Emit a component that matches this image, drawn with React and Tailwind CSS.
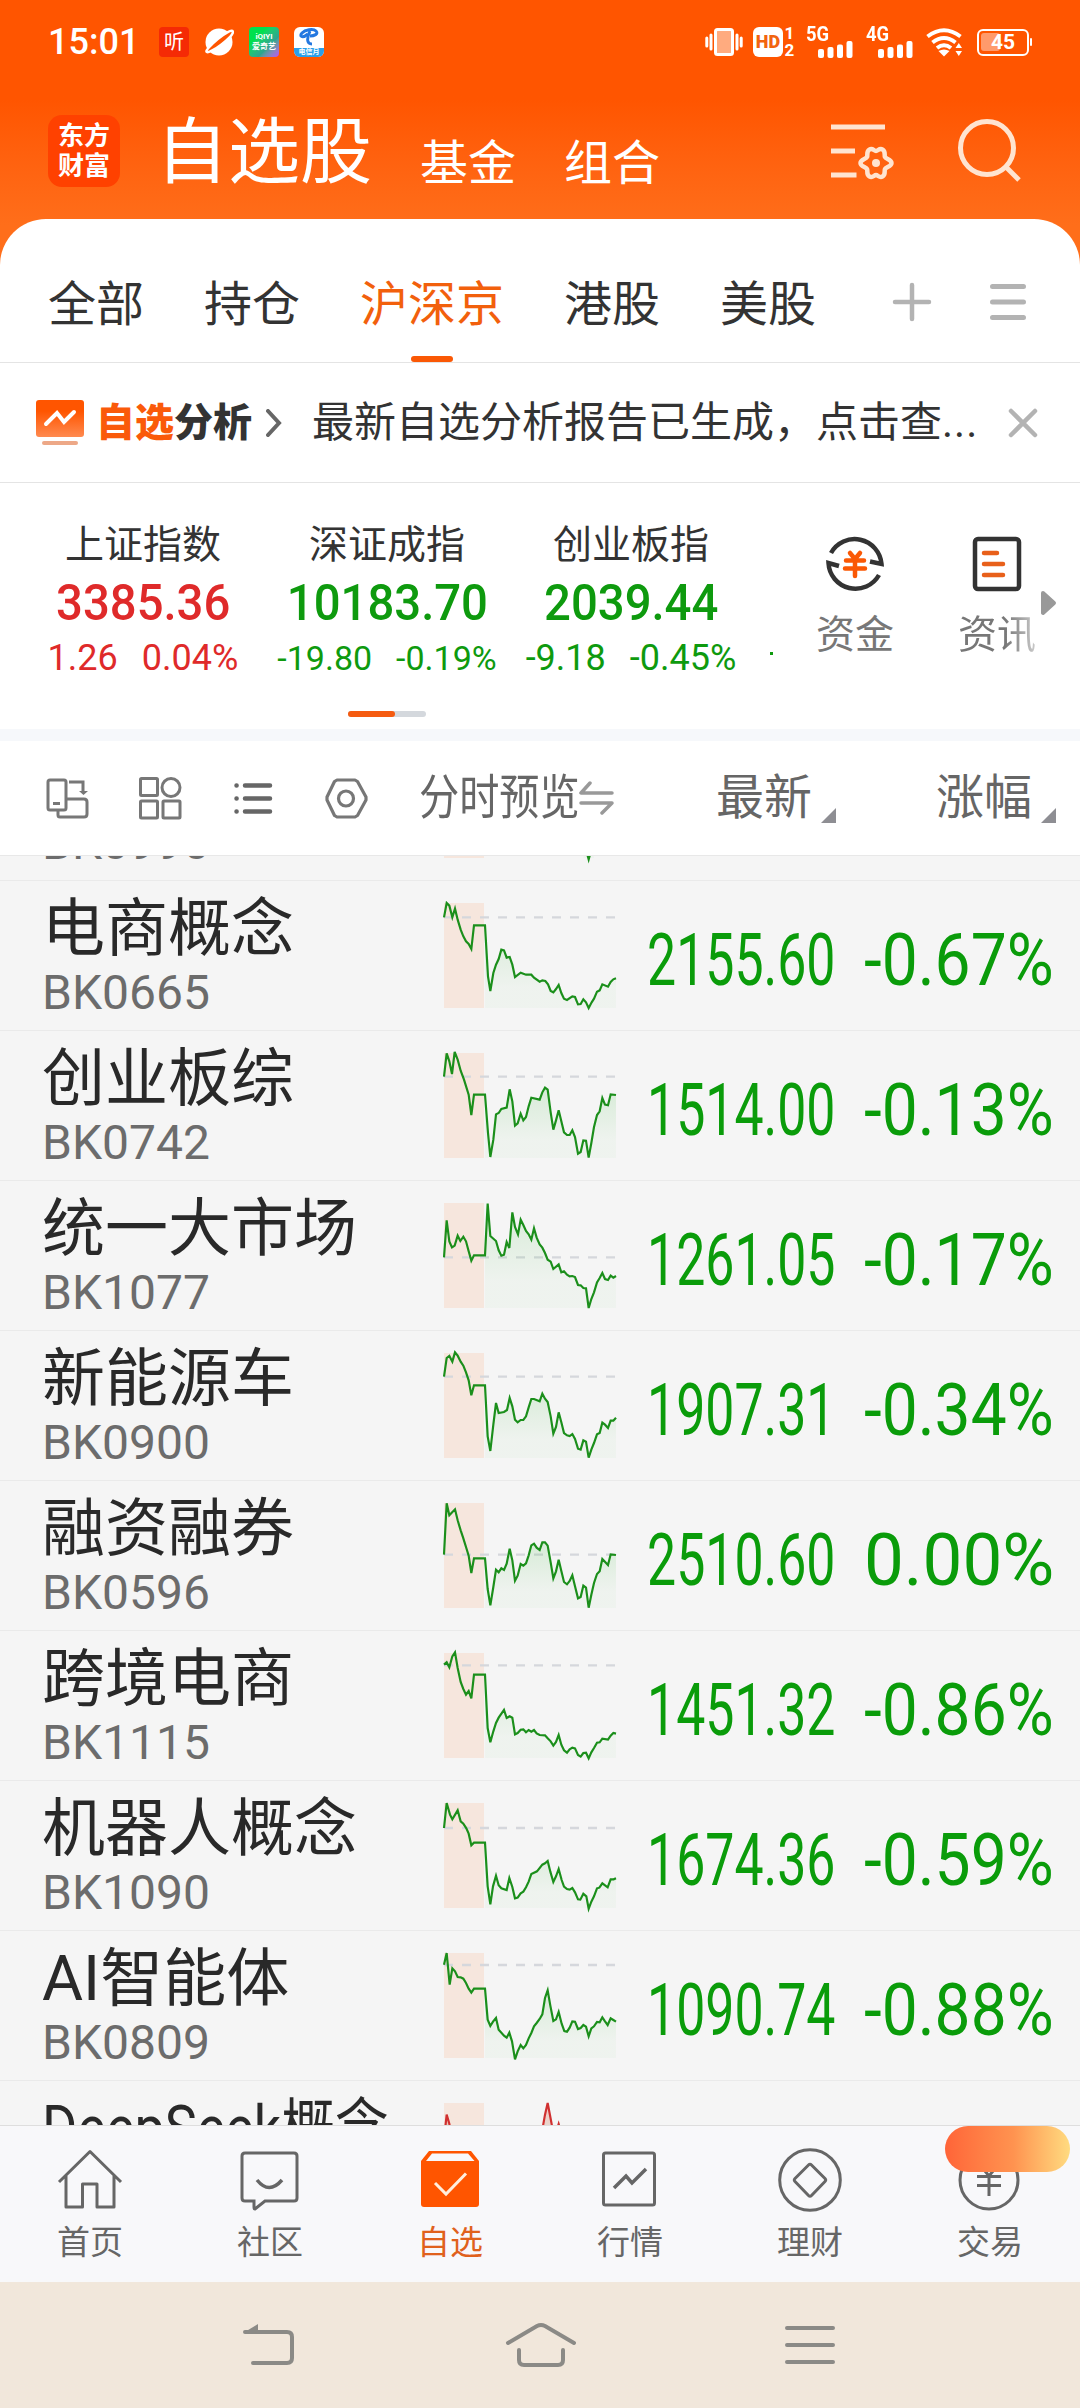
import clsx from "clsx";

const TABS = ["全部", "持仓", "沪深京", "港股", "美股"];

const INDEXES = [
  { name: "上证指数", value: "3385.36", change: "1.26", percent: "0.04%", up: true },
  { name: "深证成指", value: "10183.70", change: "-19.80", percent: "-0.19%", small: true },
  { name: "创业板指", value: "2039.44", change: "-9.18", percent: "-0.45%" },
];

// trend points live in a 516x315 box, base is the previous close
const ROWS = [
  { code: "BK0990", base: -60, trend: "418,262 426,290 434,319 442,290 450,262" },
  {
    name: "电商概念", code: "BK0665", price: "2155.60", percent: "-0.67%", base: 43,
    trend: "0,43 8,0 16,8 25,43 33,17 41,50 50,80 58,100 66,115 74,123 82,138 90,67 123,67 132,220 139,264 148,210 156,185 164,168 172,140 180,142 188,164 197,162 205,185 213,222 230,209 246,215 262,215 270,224 287,236 295,232 304,234 312,244 320,264 328,268 336,258 344,246 352,270 360,287 369,291 385,280 393,282 402,304 410,303 418,289 426,298 434,315 443,298 450,287 459,266 467,262 475,244 492,251 500,237 508,229 516,226",
  },
  {
    name: "创业板综", code: "BK0742", price: "1514.00", percent: "-0.13%", base: 71,
    trend: "0,71 8,1 16,25 24,63 32,-3 41,20 50,53 60,80 74,125 82,186 90,125 123,125 132,240 139,312 148,260 156,184 164,180 172,168 188,164 197,109 205,145 213,218 221,211 230,182 238,202 246,192 254,160 262,134 287,140 295,118 303,104 311,110 320,178 328,230 336,202 344,172 352,205 360,238 369,246 377,246 385,232 393,252 402,302 410,297 418,262 426,263 434,314 442,270 450,222 459,186 467,175 475,135 483,155 492,157 500,124 516,126",
  },
  {
    name: "统一大市场", code: "BK1077", price: "1261.05", percent: "-0.17%", base: 163,
    trend: "0,163 8,52 16,115 24,133 32,128 41,98 49,114 58,101 66,115 74,145 82,173 90,157 123,157 131,2 139,99 156,114 164,142 172,158 180,155 188,117 196,135 205,28 213,72 222,94 230,50 238,66 246,84 254,94 262,110 270,76 278,104 287,124 295,134 303,150 311,170 320,176 328,198 344,184 352,208 360,205 369,215 377,220 385,219 393,222 402,246 410,247 418,255 426,256 434,315 442,288 450,268 459,238 467,225 475,210 483,228 492,231 500,218 508,224 516,219",
  },
  {
    name: "新能源车", code: "BK0900", price: "1907.31", percent: "-0.34%", base: 71,
    trend: "0,71 8,15 16,9 25,26 33,-2 41,8 50,26 58,38 66,58 74,82 82,127 90,97 123,97 131,250 139,294 148,215 156,150 164,180 180,177 189,171 197,135 205,160 213,200 221,208 230,201 238,201 246,190 254,163 262,138 270,138 287,145 295,122 303,137 311,147 320,190 328,242 336,222 344,178 352,208 360,240 369,247 377,249 385,243 393,258 402,287 410,290 418,262 426,266 434,314 442,290 450,270 459,244 467,240 475,209 483,215 492,225 500,203 508,203 516,194",
  },
  {
    name: "融资融券", code: "BK0596", price: "2510.60", percent: "0.00%", base: 155,
    trend: "0,155 8,1 16,37 33,19 41,52 50,82 58,106 66,132 74,158 82,210 90,166 123,166 131,258 139,307 148,252 156,200 164,208 172,196 180,201 188,182 197,137 205,172 213,233 221,218 230,183 238,188 246,181 254,157 262,127 270,122 278,134 287,141 295,118 303,118 311,128 320,178 328,226 336,205 344,170 352,204 360,237 369,244 377,234 385,217 393,250 402,286 410,282 418,248 426,254 434,314 442,275 450,240 459,213 467,205 475,168 492,186 500,154 516,156",
  },
  {
    name: "跨境电商", code: "BK1115", price: "1451.32", percent: "-0.86%", base: 37,
    trend: "0,35 8,28 16,43 25,10 33,-2 41,45 50,87 58,108 66,125 74,114 82,136 90,65 123,65 131,225 139,268 148,235 156,210 164,194 180,171 188,195 197,190 205,194 213,244 221,240 230,230 238,229 246,238 254,231 262,236 270,231 278,241 287,246 303,247 311,256 320,265 328,278 336,267 344,246 352,275 360,292 369,299 377,289 385,284 393,286 402,306 410,311 418,300 426,299 434,316 442,298 450,285 459,269 467,268 475,257 492,260 500,248 508,240 516,242",
  },
  {
    name: "机器人概念", code: "BK1090", price: "1674.36", percent: "-0.59%", base: 75,
    trend: "0,75 8,0 18,35 25,49 41,22 50,55 58,62 67,76 74,92 82,127 90,119 123,119 131,250 139,304 147,250 156,218 164,247 172,256 188,261 196,225 205,252 213,286 221,284 230,271 238,266 246,253 254,236 262,213 279,205 295,185 303,181 311,174 319,206 328,237 336,220 344,198 353,231 360,251 369,258 377,260 385,255 393,268 402,289 409,290 418,272 427,280 434,317 442,296 450,280 459,256 466,254 475,241 491,253 500,229 509,229 516,226",
  },
  {
    name: "AI智能体", code: "BK0809", price: "1090.74", percent: "-0.88%", base: 36,
    trend: "0,35 8,0 17,95 25,46 33,55 41,72 50,73 58,77 66,90 74,107 82,119 90,107 123,107 131,200 139,219 147,206 156,195 164,230 180,248 188,254 196,239 204,265 213,319 221,295 230,276 238,286 246,276 254,256 262,240 270,220 278,210 287,198 295,184 303,135 311,112 319,158 328,204 336,199 344,177 353,212 361,234 369,236 377,224 385,205 393,206 402,228 410,225 418,216 426,221 434,250 442,226 450,220 459,207 467,208 475,193 483,205 491,216 500,196 508,201 516,206",
  },
  { name: "DeepSeek概念", code: "", base: 150, up: true, narrow: true, trend: "0,110 8,35 16,62 24,110 295,80 303,35 311,0 319,42 328,90 336,90 344,63 352,90" },
];

function SignalBars() {
  return (
    <svg width="35" height="17" viewBox="0 0 35 17" fill="#fff">
      <rect x="0" y="8" width="6" height="9" rx="2" />
      <rect x="9.5" y="6" width="6" height="11" rx="2" />
      <rect x="19" y="3.5" width="6" height="13.5" rx="2" />
      <rect x="28.5" y="0" width="6" height="17" rx="2" />
    </svg>
  );
}

function Signal({ label }) {
  return (
    <div className="flex h-[30px] w-[48px] flex-col">
      <span className="h-[14px] origin-left scale-x-[0.92] text-[20px] font-bold leading-[15px]">{label}</span>
      <div className="pl-3">
        <SignalBars />
      </div>
    </div>
  );
}

function StatusBar() {
  return (
    <div className="flex h-[84px] items-center pl-12 pr-[51px] text-white">
      <span className="w-[111px] text-[36px] font-medium leading-[42px]">15:01</span>
      <div className="flex gap-[15px]">
        <span className="flex size-[30px] items-center justify-center rounded bg-[#f52a05] text-[20px] leading-none">听</span>
        <svg width="30" height="30" viewBox="0 0 30 30">
          <circle cx="15" cy="15" r="13.5" fill="#fff" />
          <path d="M3 25C-2 24 28-2 29 5C29 10 6 27 3 25Z" fill="#ff5500" stroke="#fff" strokeWidth="2.5" />
        </svg>
        <span className="flex size-[30px] flex-col items-center justify-center rounded bg-linear-to-br from-[#00e04e] from-30% via-[#2fa38f] via-65% to-[#b84df0] text-[8px] font-bold leading-[10px]">
          <span>iQIYI</span>
          <span className="whitespace-nowrap">爱奇艺</span>
        </span>
        <span className="flex size-[30px] flex-col items-center justify-between overflow-hidden rounded-md bg-white">
          <svg width="22" height="19" viewBox="0 0 22 19" fill="none" stroke="#2478e0" strokeWidth="3">
            <path d="M10 7C4 12 1 9 4 6S15 1 18 4S16 9 12 9" />
            <path d="M12 4C9 10 8 17 14 17" />
          </svg>
          <span className="w-full bg-[#2b9fea] text-center text-[7px] font-bold leading-[9px]">电信月</span>
        </span>
      </div>
      <div className="ml-auto flex items-center">
        <svg width="38" height="30" viewBox="0 0 38 30" className="mr-2.5" stroke="#fff" fill="none" strokeWidth="3">
          <rect x="10.5" y="2.5" width="17" height="25" rx="2" fill="#ffab7f" />
          <path d="M6 8V22M1.8 11V19M32 8V22M36.2 11V19" strokeLinecap="round" />
        </svg>
        <span className="flex size-[30px] items-center justify-center rounded-md bg-white text-[18px] font-black leading-none text-[#f2640f]">HD</span>
        <span className="mr-2.5 flex w-[13px] flex-col items-center text-[17px] font-bold leading-[17px]">
          <span>1</span>
          <span>2</span>
        </span>
        <div className="mr-3">
          <Signal label="5G" />
        </div>
        <div className="mr-3">
          <Signal label="4G" />
        </div>
        <svg width="38" height="30" viewBox="0 0 38 30" className="mr-[13px]" fill="none" stroke="#fff" strokeWidth="4">
          <path d="M1.5 9.5Q18 -3 34.500 9.5M6.500 15.500Q18 6.500 29.500 15.500M11 21Q18 15.500 25 21" />
          <path d="M12.500 24L18 29.500L23.500 24Q18 21 12.500 24Z" fill="#fff" stroke="none" />
          <path d="M29.500 21H36L32.800 16ZM29.500 24H36L32.800 29Z" fill="#fff" stroke="none" />
        </svg>
        <div className="relative flex h-[27px] w-[52px] items-center justify-center rounded-md border-[2.5px] border-white">
          <span className="absolute left-[2px] top-[2px] h-[18px] w-[19px] rounded-[3px] bg-[#ff9a6b]" />
          <span className="absolute -right-[5px] top-[7px] h-2 w-[2px] rounded bg-white" />
          <span className="relative text-[21px] font-bold leading-none">45</span>
        </div>
      </div>
    </div>
  );
}

function AppHeader() {
  return (
    <div className="flex h-[135px] pl-12 text-white">
      <div className="mt-[31px] flex size-[72px] flex-col items-center justify-center rounded-[14px] bg-[#ff4100] text-[26px] font-bold leading-[30px]">
        <span>东方</span>
        <span>财富</span>
      </div>
      <h1 className="ml-[36px] mt-[27px] text-[72px] leading-[84px]">自选股</h1>
      <span className="ml-[48px] mt-[50px] text-[48px] leading-[60px]">基金</span>
      <span className="ml-12 mt-[50px] text-[48px] leading-[60px]">组合</span>
      <svg width="66" height="60" viewBox="0 0 66 60" className="ml-[171px] mt-[37px]" fill="none" stroke="#ffe4d0" strokeWidth="5">
        <path d="M0 6H54M0 30H24M0 54H25.500" />
        <path
          d="M38.500 28.500C41.500 26.500 43 30 45 30S48.500 26.500 51.500 28.500C55 30.500 53 34 54 36S60.500 38.500 60.500 42S55 46 54 48S55 53.500 51.500 55.500C48.500 57.500 47 54 45 54S41.500 57.500 38.500 55.500C35 53.500 37 50 36 48S29.500 45.500 29.500 42S35 38 36 36S35 30.500 38.500 28.500Z"
          strokeWidth="4.500"
          strokeLinejoin="round"
        />
        <circle cx="45" cy="42" r="4" fill="#ffe4d0" stroke="none" />
      </svg>
      <svg width="64" height="66" viewBox="0 0 64 66" className="ml-[60px] mt-[33px]" fill="none" stroke="#ffe4d0" strokeWidth="5">
        <circle cx="30" cy="31" r="26.500" />
        <path d="M48 49L62 63" />
      </svg>
    </div>
  );
}

function TabBar() {
  return (
    <div className="flex h-[144px] border-b border-[#e4e4e4] pl-12">
      <div className="flex gap-[60px]">
        {TABS.map((tab) => {
          const active = tab === "沪深京";
          return (
            <div key={tab} className={clsx("flex flex-col items-center pt-[56px] text-[48px] leading-[60px]", active ? "text-[#f2600c]" : "text-[#333]")}>
              <span>{tab}</span>
              {active && <span className="mt-[21px] h-1.5 w-[42px] rounded-full bg-[#fa5805]" />}
            </div>
          );
        })}
      </div>
      <svg width="40" height="40" viewBox="0 0 40 40" className="ml-[76px] mt-[63px]" stroke="#b3b3b3" strokeWidth="4.500" strokeLinecap="round">
        <path d="M3 20H37M20 3V37" />
      </svg>
      <svg width="36" height="40" viewBox="0 0 36 40" className="ml-[58px] mt-[63px]" stroke="#b3b3b3" strokeWidth="5" strokeLinecap="round">
        <path d="M2.500 4.500H33.500M2.500 20H33.500M2.500 35.500H33.500" />
      </svg>
    </div>
  );
}

function ReportBanner() {
  return (
    <div className="flex h-[120px] items-center border-b border-[#e4e4e4] pl-9">
      <svg width="48" height="46" viewBox="0 0 48 46">
        <defs>
          <linearGradient id="report" x1="0" y1="0" x2="0" y2="1">
            <stop offset="0.3" stopColor="#ff5500" />
            <stop offset="1" stopColor="#ff8a50" />
          </linearGradient>
        </defs>
        <rect width="48" height="37" rx="3" fill="url(#report)" />
        <path d="M10 24L21 13L28 22L38 12" fill="none" stroke="#fff" strokeWidth="4" strokeLinecap="round" />
        <rect x="6" y="41" width="36" height="4" rx="2" fill="#eda887" />
      </svg>
      <span className="ml-3 text-[39px] font-black leading-[48px] text-[#333]">
        <span className="text-[#fa5a0a]">自选</span>分析
      </span>
      <svg width="16" height="28" viewBox="0 0 16 28" className="ml-[14px]" fill="none" stroke="#666" strokeWidth="4" strokeLinecap="round">
        <path d="M2 2L13 14L2 26" />
      </svg>
      <span className="ml-[30px] w-[666px] whitespace-nowrap text-[42px] leading-[48px] text-[#333]">
        最新自选分析报告已生成，点击查<span className="tracking-[1px]">...</span>
      </span>
      <svg width="30" height="30" viewBox="0 0 30 30" className="ml-[30px]" stroke="#b3b3b3" strokeWidth="4.500" strokeLinecap="round">
        <path d="M3 3L27 27M27 3L3 27" />
      </svg>
    </div>
  );
}

function IndexPanel() {
  return (
    <div className="flex h-[246px] pl-[21px]">
      <div className="w-[754px]">
        <div className="flex overflow-hidden pt-[37px]">
          {INDEXES.map((item) => (
            <div key={item.name} className={clsx("flex w-[244px] shrink-0 flex-col items-center", item.up ? "text-[#df2a2a]" : "text-[#0e9a0e]")}>
              <span className="text-[39px] leading-[50px] text-[#333]">{item.name}</span>
              <span className="mt-1 scale-x-[0.945] text-[50px] font-medium leading-[58px]">{item.value}</span>
              <span className={clsx("mt-[5px] flex gap-6 leading-[42px]", item.small ? "text-[34px]" : "text-[36px]")}>
                <span>{item.change}</span>
                <span>{item.percent}</span>
              </span>
            </div>
          ))}
          <div className="mt-[132px] size-[3px] translate-x-[17px] bg-[#0e9a0e]" />
        </div>
        <div className="ml-[327px] mt-[32px] h-1.5 w-[78px] rounded-full bg-[#d4d8dd]">
          <div className="h-1.5 w-[47px] rounded-full bg-[#f55b10]" />
        </div>
      </div>
      <div className="flex w-[160px] flex-col items-center pt-[50px] text-[39px] leading-[50px] text-[#777]">
        <svg width="62" height="62" viewBox="0 0 62 62" fill="none" stroke="#333" strokeWidth="4.500">
          <path d="M7 20A27 27 0 0 1 57.500 31L46 28.500" strokeLinejoin="miter" />
          <path d="M55 42A27 27 0 0 1 4.500 30L15 33" />
          <path d="M26 20L31 26L36 20M22 27.500H40M21 35.500H41M31 26V43" stroke="#fa5805" strokeLinecap="round" />
        </svg>
        <span className="mt-[15px]">资金</span>
      </div>
      <div className="flex w-[106px] flex-col items-center pt-[50px] text-[39px] leading-[50px] text-[#777]">
        <svg width="50" height="62" viewBox="0 0 50 62" className="ml-[18px]" fill="none" stroke="#333" strokeWidth="4.500">
          <rect x="3" y="6" width="44" height="50" rx="3" />
          <path d="M12 20H25M12 31H31M12 42H31" stroke="#e8601a" strokeLinecap="round" />
        </svg>
        <span className="ml-[18px] mt-[15px] bg-linear-to-r from-[#777] from-60% to-[#ccc] bg-clip-text text-transparent">资讯</span>
      </div>
      <svg width="16" height="26" viewBox="0 0 16 26" className="mt-[107px]">
        <path d="M2 3L13 13L2 23Z" fill="#999" stroke="#999" strokeWidth="4" strokeLinejoin="round" />
      </svg>
    </div>
  );
}

function SortMark() {
  return (
    <svg width="15" height="15" viewBox="0 0 15 15" className="mb-8 self-end">
      <path d="M15 0V15H0Z" fill="#8e8e93" />
    </svg>
  );
}

function ListToolbar() {
  return (
    <div className="flex h-[115px] items-center border-b border-[#e8e8e8] pl-[46px] text-[48px] leading-[60px] text-[#666]">
      <svg width="43" height="43" viewBox="0 0 43 43" fill="none" stroke="#777" strokeWidth="3">
        <rect x="2" y="3" width="18" height="30" rx="2" />
        <path d="M7 26.500H14M12 34V38Q12 40 14 40H38Q41 40 41 37V25Q41 22 38 22H21" />
        <path d="M23 5H37V14" />
        <path d="M33 14H42L37.500 18Z" fill="#777" stroke="none" />
      </svg>
      <svg width="43" height="43" viewBox="0 0 43 43" className="ml-[50px]" fill="none" stroke="#777" strokeWidth="3">
        <rect x="1.500" y="1.500" width="17" height="17" rx="1" />
        <circle cx="32" cy="10.500" r="9" />
        <rect x="1.500" y="24" width="17" height="17" rx="1" />
        <rect x="24" y="24" width="17" height="17" rx="1" />
      </svg>
      <svg width="39" height="43" viewBox="0 0 39 43" className="ml-[52px]" stroke="#666" strokeWidth="4.500" strokeLinecap="round">
        <path d="M2.500 8.500H2.600M11 8.500H36M2.500 21.500H2.600M11 21.500H36M2.500 34.500H2.600M11 34.500H36" />
      </svg>
      <svg width="43" height="43" viewBox="0 0 43 43" className="ml-[52px]" fill="none" stroke="#777" strokeWidth="3.200" strokeLinejoin="round">
        <path d="M12 3H30L32.500 4.500L41 20V23L32.500 38.500L30 40H12L9.500 38.500L2 23V20L9.500 4.500Z" />
        <circle cx="21" cy="21.500" r="7.500" />
      </svg>
      <span className="ml-[51px] w-[160px] origin-left scale-x-[0.837] whitespace-nowrap">分时预览</span>
      <svg width="36" height="34" viewBox="0 0 36 34" fill="none" stroke="#999" strokeWidth="3.500" strokeLinecap="round" strokeLinejoin="round">
        <path d="M11 2L2 12H33M2 22H33L23 32" />
      </svg>
      <span className="ml-[101px]">最新</span>
      <span className="ml-[9px] flex h-full">
        <SortMark />
      </span>
      <span className="ml-[100px]">涨幅</span>
      <span className="ml-[9px] flex h-full">
        <SortMark />
      </span>
    </div>
  );
}

function Sparkline({ id, trend, base, up }) {
  const color = up ? "#d03030" : "#1b8f1b";
  const points = trend.split(" ");
  const area = points.filter((p) => up || parseInt(p, 10) >= 123);
  const firstX = area[0].split(",")[0];
  const lastX = area[area.length - 1].split(",")[0];

  return (
    <svg width="172" height="105" viewBox="0 0 516 315" className="overflow-visible">
      <defs>
        <linearGradient id={`fill-${id}`} x1="0" y1="0" x2="0" y2="1">
          <stop offset="0" stopColor={up ? "#ff5050" : "#1fb01f"} stopOpacity={up ? 0.3 : 0.14} />
          <stop offset="0.75" stopColor="#1fb01f" stopOpacity="0.03" />
        </linearGradient>
      </defs>
      <rect width="120" height="315" fill="#f6e6dd" />
      <path d={`M0 ${base}H516`} stroke="#d5d7dc" strokeWidth="7" strokeDasharray="27 27" />
      <path d={`M${firstX} 315L${area.join("L")}L${lastX} 315Z`} fill={`url(#fill-${id})`} />
      <polyline points={trend} fill="none" stroke={color} strokeWidth="6.500" />
    </svg>
  );
}

function StockRow({ row }) {
  return (
    <div className="flex h-[150px] shrink-0 border-b border-[#eaeaea] pl-[42px] text-[#0a9c0a]">
      <div className="w-[401px] whitespace-nowrap pt-[9px]">
        <div className={clsx("h-[75px] w-[346px] origin-left text-[63px] leading-[78px] text-[#292929]", row.narrow && "scale-x-[0.855]")}>{row.name}</div>
        <div className="text-[48px] leading-[56px] text-[#6c6c6c]">{row.code}</div>
      </div>
      <div className="w-[204px] pl-px pt-[22px]">
        <Sparkline id={row.code || "last"} trend={row.trend} base={row.base} up={row.up} />
      </div>
      <div className="w-[217px] pt-[36px] text-[72px] leading-[88px]">
        <div className="w-[192px] origin-left scale-x-[0.72] whitespace-nowrap">{row.price}</div>
      </div>
      <div className="pt-[36px] text-[72px] leading-[88px]">
        <div className={clsx("w-[192px] origin-left whitespace-nowrap", row.percent === "0.00%" ? "scale-x-[0.985]" : "scale-x-[0.89]")}>{row.percent}</div>
      </div>
    </div>
  );
}

function NavItem({ label, active, children }) {
  return (
    <div className={clsx("relative flex w-[180px] flex-col items-center pt-[22px]", active ? "text-[#e0611c]" : "text-[#666]")}>
      <svg width="66" height="64" viewBox="0 0 66 64" fill="none" stroke="currentColor" strokeWidth="3">
        {children}
      </svg>
      <span className="mt-[10px] text-[33px] leading-[42px]">{label}</span>
    </div>
  );
}

function BottomNav() {
  return (
    <div className="relative flex h-[157px] border-t border-[#dedede] bg-[#f8f8fa]">
      <NavItem label="首页">
        <path d="M2 34L33 3.500L64 34M9 28V59H25.500V36H40V59H57V28" strokeLinejoin="round" />
      </NavItem>
      <NavItem label="社区">
        <path d="M8 5H57Q60 5 60 8V50Q60 53 57 53H28L18 61Q17 61 17 59V53H8Q5 53 5 50V8Q5 5 8 5Z" />
        <path d="M20 32Q32 47 45 32" strokeWidth="3.500" />
      </NavItem>
      <NavItem label="自选" active>
        <path d="M4 13L12 3H54L62 13V56Q62 59 59 59H7Q4 59 4 56Z" fill="#ff5500" stroke="none" />
        <path d="M9 13L15 5.500H51L57.500 13Z" fill="#f8f8fa" stroke="none" />
        <path d="M18 35L29 46L49 25.500" stroke="#ffeedd" strokeWidth="3" />
      </NavItem>
      <NavItem label="行情">
        <rect x="6.500" y="5" width="51" height="52" rx="2" />
        <path d="M17 40L29 28L35 35L49 21" strokeWidth="3.500" />
      </NavItem>
      <NavItem label="理财">
        <circle cx="33" cy="32" r="30.300" />
        <path d="M31.500 17Q33 15.500 34.500 17L48 30.500Q49.500 32 48 33.500L34.500 47.500Q33 49 31.500 47.500L18 33.500Q16.500 32 18 30.500Z" />
      </NavItem>
      <NavItem label="交易">
        <circle cx="32" cy="32" r="29" />
        <path d="M20 28.500H44M20 37.500H44M32 28V48M23 17L32 28L41 17" />
      </NavItem>
      <div className="absolute right-[10px] top-0 h-[46px] w-[125px] rounded-full bg-linear-to-r from-[#ff6438] via-[#ff9350] via-55% to-[#ffdb80]" />
    </div>
  );
}

function SystemBar() {
  return (
    <div className="flex h-[126px] items-center bg-[#f1e7db] pl-[243px]">
      <svg width="52" height="44" viewBox="0 0 52 44" fill="none" stroke="#8b8a86" strokeWidth="4" strokeLinecap="round">
        <path d="M2 9H44Q49 9 49 14V35Q49 40 44 40H10" />
        <path d="M1 9.500L15 1V10Z" fill="#8b8a86" stroke="none" />
      </svg>
      <svg width="72" height="46" viewBox="0 0 72 46" className="ml-[210px]" fill="none" stroke="#8b8a86" strokeWidth="4" strokeLinecap="round">
        <path d="M3 21L32 4Q36 2 40 4L69 21M14 28V38Q14 43 19 43H53Q58 43 58 38V28" />
      </svg>
      <svg width="50" height="40" viewBox="0 0 50 40" className="ml-[208px]" stroke="#8b8a86" strokeWidth="4" strokeLinecap="round">
        <path d="M2 3H48M2 20H48M2 37H48" />
      </svg>
    </div>
  );
}

export default function App() {
  return (
    <div className="flex h-[2408px] w-[1080px] flex-col overflow-hidden bg-white font-['Roboto','Noto_Sans_CJK_SC',sans-serif]">
      <div className="bg-linear-to-b from-[#ff5500] from-[100px] to-[#ff6e1a] to-[225px]">
        <StatusBar />
        <AppHeader />
        <div className="rounded-t-[46px] bg-white">
          <TabBar />
        </div>
      </div>
      <ReportBanner />
      <IndexPanel />
      <div className="h-3 bg-[#f6f8fb]" />
      <ListToolbar />
      <div className="flex h-[1269px] flex-col overflow-hidden bg-[#f5f5f5]">
        <div className="-mt-[125px] flex flex-col">
          {ROWS.map((row) => (
            <StockRow key={row.trend} row={row} />
          ))}
        </div>
      </div>
      <BottomNav />
      <SystemBar />
    </div>
  );
}
